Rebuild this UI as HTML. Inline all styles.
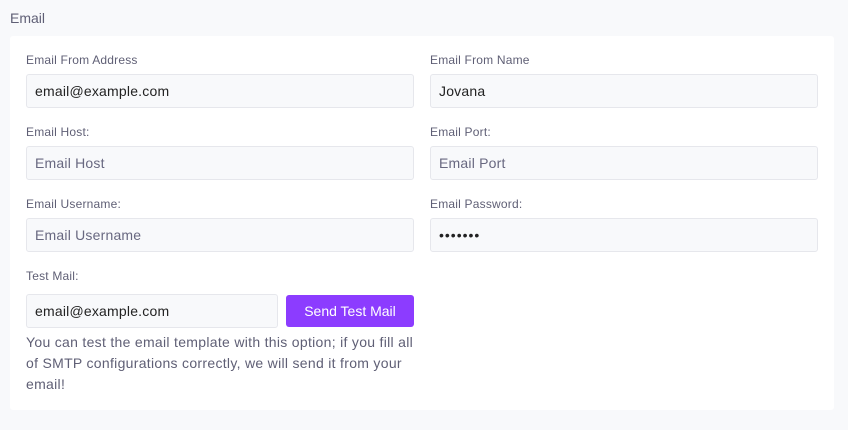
<!DOCTYPE html>
<html><head><style>
body{margin:0;width:848px;height:430px;background:#f8f9fb;font-family:"Liberation Sans",sans-serif;position:relative;overflow:hidden}
.t{position:absolute;left:10px;top:10px;font-size:14px;color:#5f5f75}
.card{position:absolute;left:10px;top:36px;width:824px;height:374px;background:#fff;border-radius:3px}
.l{position:absolute;font-size:12px;color:#5f5f75;letter-spacing:0.2px}
.i{position:absolute;box-sizing:border-box;height:34px;background:#f8f9fb;border:1px solid #e6e7ec;border-radius:3px;font-size:14px;line-height:32px;padding-left:8px;color:#222;letter-spacing:0.2px}
.p{color:#686880}
.b{position:absolute;left:286px;top:295px;width:128px;height:32px;background:#8c3cff;border-radius:3px;color:#fff;font-size:14px;line-height:32px;text-align:center}
.d{position:absolute;left:26px;top:332px;white-space:nowrap;font-size:14px;line-height:21px;color:#5f5f75;letter-spacing:0.3px}
</style></head><body>
<div class="t">Email</div>
<div class="card"></div>
<div class="l" style="left:26px;top:53px">Email From Address</div>
<div class="l" style="left:430px;top:53px">Email From Name</div>
<div class="i" style="left:26px;top:74px;width:388px">email@example.com</div>
<div class="i" style="left:430px;top:74px;width:388px">Jovana</div>
<div class="l" style="left:26px;top:125px">Email Host:</div>
<div class="l" style="left:430px;top:125px">Email Port:</div>
<div class="i p" style="left:26px;top:146px;width:388px">Email Host</div>
<div class="i p" style="left:430px;top:146px;width:388px">Email Port</div>
<div class="l" style="left:26px;top:197px">Email Username:</div>
<div class="l" style="left:430px;top:197px">Email Password:</div>
<div class="i p" style="left:26px;top:218px;width:388px">Email Username</div>
<div class="i" style="left:430px;top:218px;width:388px;letter-spacing:1px">•••••••</div>
<div class="l" style="left:26px;top:269px">Test Mail:</div>
<div class="i" style="left:26px;top:294px;width:252px">email@example.com</div>
<div class="b">Send Test Mail</div>
<div class="d">You can test the email template with this option; if you fill all<br>of SMTP configurations correctly, we will send it from your<br>email!</div>
</body></html>
